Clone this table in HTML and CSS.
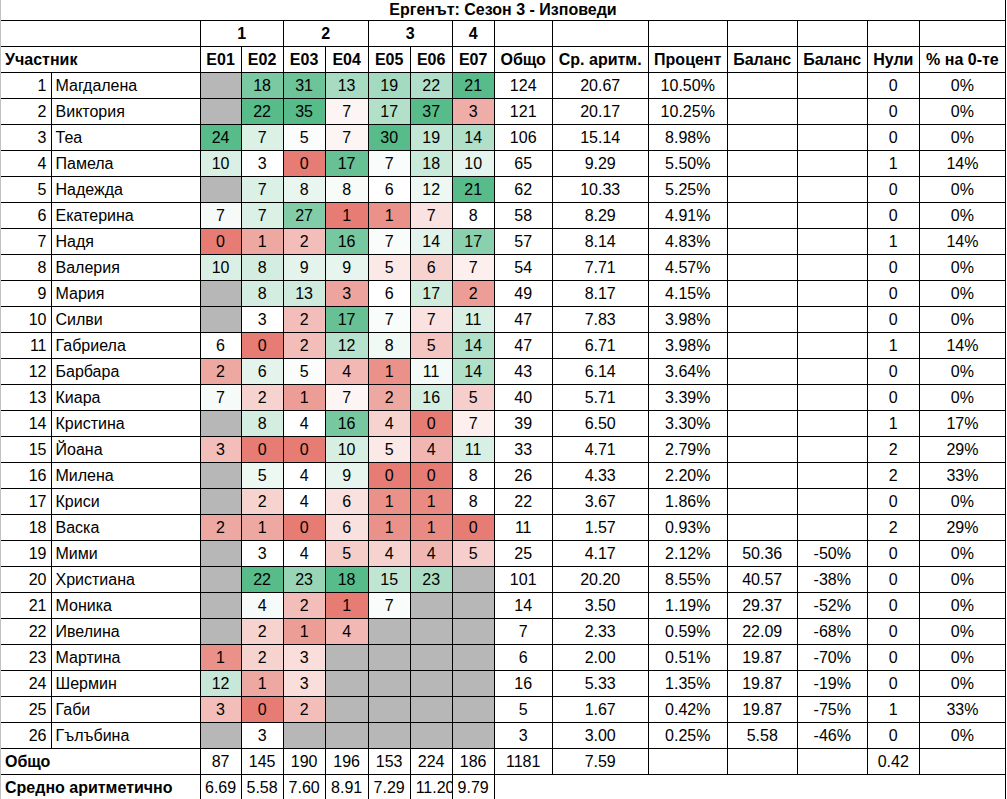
FILE: index.html
```html
<!DOCTYPE html>
<html lang="bg">
<head>
<meta charset="utf-8">
<title>Ергенът: Сезон 3 - Изповеди</title>
<link rel="stylesheet" href="styles.css">
</head>
<body>
<div class="wrap">
<table class="sheet">
<colgroup>
<col class="c-num"><col class="c-name">
<col class="c-e01"><col class="c-e02"><col class="c-e03"><col class="c-e04"><col class="c-e05"><col class="c-e06"><col class="c-e07">
<col class="c-total"><col class="c-avg"><col class="c-pct"><col class="c-bal"><col class="c-bal"><col class="c-zero"><col class="c-zpct">
</colgroup>
<thead>
<tr class="title"><td colspan="16">Ергенът: Сезон 3 - Изповеди</td></tr>
<tr class="group"><td colspan="2" class="first"></td><td colspan="2">1</td><td colspan="2">2</td><td colspan="2">3</td><td>4</td><td></td><td></td><td></td><td></td><td></td><td></td><td></td></tr>
<tr class="head"><td colspan="2" class="first left">Участник</td><td>E01</td><td>E02</td><td>E03</td><td>E04</td><td>E05</td><td>E06</td><td>E07</td><td>Общо</td><td>Ср. аритм.</td><td>Процент</td><td>Баланс</td><td>Баланс</td><td>Нули</td><td>% на 0-те</td></tr>
</thead>
<tbody class="data">
<tr><td class="first num">1</td><td class="name">Магдалена</td><td class="na"></td><td>18</td><td>31</td><td>13</td><td>19</td><td>22</td><td>21</td><td>124</td><td>20.67</td><td>10.50%</td><td></td><td></td><td>0</td><td>0%</td></tr>
<tr><td class="first num">2</td><td class="name">Виктория</td><td class="na"></td><td>22</td><td>35</td><td>7</td><td>17</td><td>37</td><td>3</td><td>121</td><td>20.17</td><td>10.25%</td><td></td><td></td><td>0</td><td>0%</td></tr>
<tr><td class="first num">3</td><td class="name">Теа</td><td>24</td><td>7</td><td>5</td><td>7</td><td>30</td><td>19</td><td>14</td><td>106</td><td>15.14</td><td>8.98%</td><td></td><td></td><td>0</td><td>0%</td></tr>
<tr><td class="first num">4</td><td class="name">Памела</td><td>10</td><td>3</td><td>0</td><td>17</td><td>7</td><td>18</td><td>10</td><td>65</td><td>9.29</td><td>5.50%</td><td></td><td></td><td>1</td><td>14%</td></tr>
<tr><td class="first num">5</td><td class="name">Надежда</td><td class="na"></td><td>7</td><td>8</td><td>8</td><td>6</td><td>12</td><td>21</td><td>62</td><td>10.33</td><td>5.25%</td><td></td><td></td><td>0</td><td>0%</td></tr>
<tr><td class="first num">6</td><td class="name">Екатерина</td><td>7</td><td>7</td><td>27</td><td>1</td><td>1</td><td>7</td><td>8</td><td>58</td><td>8.29</td><td>4.91%</td><td></td><td></td><td>0</td><td>0%</td></tr>
<tr><td class="first num">7</td><td class="name">Надя</td><td>0</td><td>1</td><td>2</td><td>16</td><td>7</td><td>14</td><td>17</td><td>57</td><td>8.14</td><td>4.83%</td><td></td><td></td><td>1</td><td>14%</td></tr>
<tr><td class="first num">8</td><td class="name">Валерия</td><td>10</td><td>8</td><td>9</td><td>9</td><td>5</td><td>6</td><td>7</td><td>54</td><td>7.71</td><td>4.57%</td><td></td><td></td><td>0</td><td>0%</td></tr>
<tr><td class="first num">9</td><td class="name">Мария</td><td class="na"></td><td>8</td><td>13</td><td>3</td><td>6</td><td>17</td><td>2</td><td>49</td><td>8.17</td><td>4.15%</td><td></td><td></td><td>0</td><td>0%</td></tr>
<tr><td class="first num">10</td><td class="name">Силви</td><td class="na"></td><td>3</td><td>2</td><td>17</td><td>7</td><td>7</td><td>11</td><td>47</td><td>7.83</td><td>3.98%</td><td></td><td></td><td>0</td><td>0%</td></tr>
<tr><td class="first num">11</td><td class="name">Габриела</td><td>6</td><td>0</td><td>2</td><td>12</td><td>8</td><td>5</td><td>14</td><td>47</td><td>6.71</td><td>3.98%</td><td></td><td></td><td>1</td><td>14%</td></tr>
<tr><td class="first num">12</td><td class="name">Барбара</td><td>2</td><td>6</td><td>5</td><td>4</td><td>1</td><td>11</td><td>14</td><td>43</td><td>6.14</td><td>3.64%</td><td></td><td></td><td>0</td><td>0%</td></tr>
<tr><td class="first num">13</td><td class="name">Киара</td><td>7</td><td>2</td><td>1</td><td>7</td><td>2</td><td>16</td><td>5</td><td>40</td><td>5.71</td><td>3.39%</td><td></td><td></td><td>0</td><td>0%</td></tr>
<tr><td class="first num">14</td><td class="name">Кристина</td><td class="na"></td><td>8</td><td>4</td><td>16</td><td>4</td><td>0</td><td>7</td><td>39</td><td>6.50</td><td>3.30%</td><td></td><td></td><td>1</td><td>17%</td></tr>
<tr><td class="first num">15</td><td class="name">Йоана</td><td>3</td><td>0</td><td>0</td><td>10</td><td>5</td><td>4</td><td>11</td><td>33</td><td>4.71</td><td>2.79%</td><td></td><td></td><td>2</td><td>29%</td></tr>
<tr><td class="first num">16</td><td class="name">Милена</td><td class="na"></td><td>5</td><td>4</td><td>9</td><td>0</td><td>0</td><td>8</td><td>26</td><td>4.33</td><td>2.20%</td><td></td><td></td><td>2</td><td>33%</td></tr>
<tr><td class="first num">17</td><td class="name">Криси</td><td class="na"></td><td>2</td><td>4</td><td>6</td><td>1</td><td>1</td><td>8</td><td>22</td><td>3.67</td><td>1.86%</td><td></td><td></td><td>0</td><td>0%</td></tr>
<tr><td class="first num">18</td><td class="name">Васка</td><td>2</td><td>1</td><td>0</td><td>6</td><td>1</td><td>1</td><td>0</td><td>11</td><td>1.57</td><td>0.93%</td><td></td><td></td><td>2</td><td>29%</td></tr>
<tr><td class="first num">19</td><td class="name">Мими</td><td class="na"></td><td>3</td><td>4</td><td>5</td><td>4</td><td>4</td><td>5</td><td>25</td><td>4.17</td><td>2.12%</td><td>50.36</td><td>-50%</td><td>0</td><td>0%</td></tr>
<tr><td class="first num">20</td><td class="name">Христиана</td><td class="na"></td><td>22</td><td>23</td><td>18</td><td>15</td><td>23</td><td class="na"></td><td>101</td><td>20.20</td><td>8.55%</td><td>40.57</td><td>-38%</td><td>0</td><td>0%</td></tr>
<tr><td class="first num">21</td><td class="name">Моника</td><td class="na"></td><td>4</td><td>2</td><td>1</td><td>7</td><td class="na"></td><td class="na"></td><td>14</td><td>3.50</td><td>1.19%</td><td>29.37</td><td>-52%</td><td>0</td><td>0%</td></tr>
<tr><td class="first num">22</td><td class="name">Ивелина</td><td class="na"></td><td>2</td><td>1</td><td>4</td><td class="na"></td><td class="na"></td><td class="na"></td><td>7</td><td>2.33</td><td>0.59%</td><td>22.09</td><td>-68%</td><td>0</td><td>0%</td></tr>
<tr><td class="first num">23</td><td class="name">Мартина</td><td>1</td><td>2</td><td>3</td><td class="na"></td><td class="na"></td><td class="na"></td><td class="na"></td><td>6</td><td>2.00</td><td>0.51%</td><td>19.87</td><td>-70%</td><td>0</td><td>0%</td></tr>
<tr><td class="first num">24</td><td class="name">Шермин</td><td>12</td><td>1</td><td>3</td><td class="na"></td><td class="na"></td><td class="na"></td><td class="na"></td><td>16</td><td>5.33</td><td>1.35%</td><td>19.87</td><td>-19%</td><td>0</td><td>0%</td></tr>
<tr><td class="first num">25</td><td class="name">Габи</td><td>3</td><td>0</td><td>2</td><td class="na"></td><td class="na"></td><td class="na"></td><td class="na"></td><td>5</td><td>1.67</td><td>0.42%</td><td>19.87</td><td>-75%</td><td>1</td><td>33%</td></tr>
<tr><td class="first num">26</td><td class="name">Гълъбина</td><td class="na"></td><td>3</td><td class="na"></td><td class="na"></td><td class="na"></td><td class="na"></td><td class="na"></td><td>3</td><td>3.00</td><td>0.25%</td><td>5.58</td><td>-46%</td><td>0</td><td>0%</td></tr>
</tbody>
<tfoot>
<tr><td colspan="2" class="first left bold">Общо</td><td>87</td><td>145</td><td>190</td><td>196</td><td>153</td><td>224</td><td>186</td><td>1181</td><td>7.59</td><td></td><td></td><td></td><td>0.42</td><td></td></tr>
<tr><td colspan="2" class="first left bold">Средно аритметично</td><td>6.69</td><td>5.58</td><td>7.60</td><td>8.91</td><td>7.29</td><td class="clip">11.20</td><td>9.79</td><td colspan="7"></td></tr>
</tfoot>
</table>
</div>
<script src="script.js"></script>
</body>
</html>
```

FILE: styles.css
```css
html, body {
  margin: 0;
  padding: 0;
  background: #ffffff;
}

body {
  font-family: "Liberation Sans", Arial, sans-serif;
  font-size: 16px;
  color: #000000;
}

.wrap {
  border-left: 1px solid #c0c0c0;
  width: 1006px;
}

.sheet {
  border-collapse: collapse;
  table-layout: fixed;
  width: 1005px;
}

.c-num { width: 50px; }
.c-name { width: 149px; }
.c-e01 { width: 41px; }
.c-e02 { width: 42px; }
.c-e03 { width: 42px; }
.c-e04 { width: 43px; }
.c-e05 { width: 42px; }
.c-e06 { width: 42px; }
.c-e07 { width: 42px; }
.c-total { width: 58px; }
.c-avg { width: 96px; }
.c-pct { width: 79px; }
.c-bal { width: 70px; }
.c-zero { width: 52px; }
.c-zpct { width: 86px; }

.sheet td {
  border: 1px solid #000000;
  padding: 0 4px;
  height: 25px;
  text-align: center;
  vertical-align: middle;
  white-space: nowrap;
  overflow: hidden;
  line-height: 18px;
}

.sheet td.first {
  border-left: none;
}

.sheet .title td {
  border-top: none;
  border-left: none;
  height: 20px;
  font-weight: bold;
  line-height: 18px;
}

.sheet .group td,
.sheet .head td {
  font-weight: bold;
}

.sheet td.left {
  text-align: left;
}

.sheet td.bold {
  font-weight: bold;
}

.sheet td.num {
  text-align: right;
}

.sheet td.name {
  text-align: left;
}

.sheet td.na {
  background: #b7b7b7;
}

.sheet td.clip {
  text-align: left;
  padding-left: 5px;
  padding-right: 0;
  text-overflow: clip;
}
```

FILE: script.js
```js
(function () {
  var rows = document.querySelectorAll('tbody.data tr');
  var LO = [230, 124, 115];
  var MID = [255, 255, 255];
  var HI = [87, 187, 138];

  function mix(a, b, t) {
    return 'rgb(' + [0, 1, 2].map(function (i) {
      return Math.round(a[i] + (b[i] - a[i]) * t);
    }).join(',') + ')';
  }

  for (var c = 0; c < 7; c++) {
    var cells = [];
    var vals = [];
    rows.forEach(function (r) {
      var td = r.cells[2 + c];
      if (!td || td.classList.contains('na')) return;
      var v = parseFloat(td.textContent);
      if (isNaN(v)) return;
      cells.push(td);
      vals.push(v);
    });
    if (!vals.length) continue;
    var sorted = vals.slice().sort(function (a, b) { return a - b; });
    var n = sorted.length;
    var pos = 0.5 * (n - 1);
    var lo = Math.floor(pos);
    var hi = Math.ceil(pos);
    var mid = sorted[lo] + (sorted[hi] - sorted[lo]) * (pos - lo);
    var min = sorted[0];
    var max = sorted[n - 1];
    cells.forEach(function (td, i) {
      var v = vals[i];
      var color;
      if (v <= mid) {
        var t = mid === min ? 0 : (mid - v) / (mid - min);
        color = mix(MID, LO, t);
      } else {
        var t2 = max === mid ? 0 : (v - mid) / (max - mid);
        color = mix(MID, HI, t2);
      }
      td.style.backgroundColor = color;
    });
  }
})();
```
